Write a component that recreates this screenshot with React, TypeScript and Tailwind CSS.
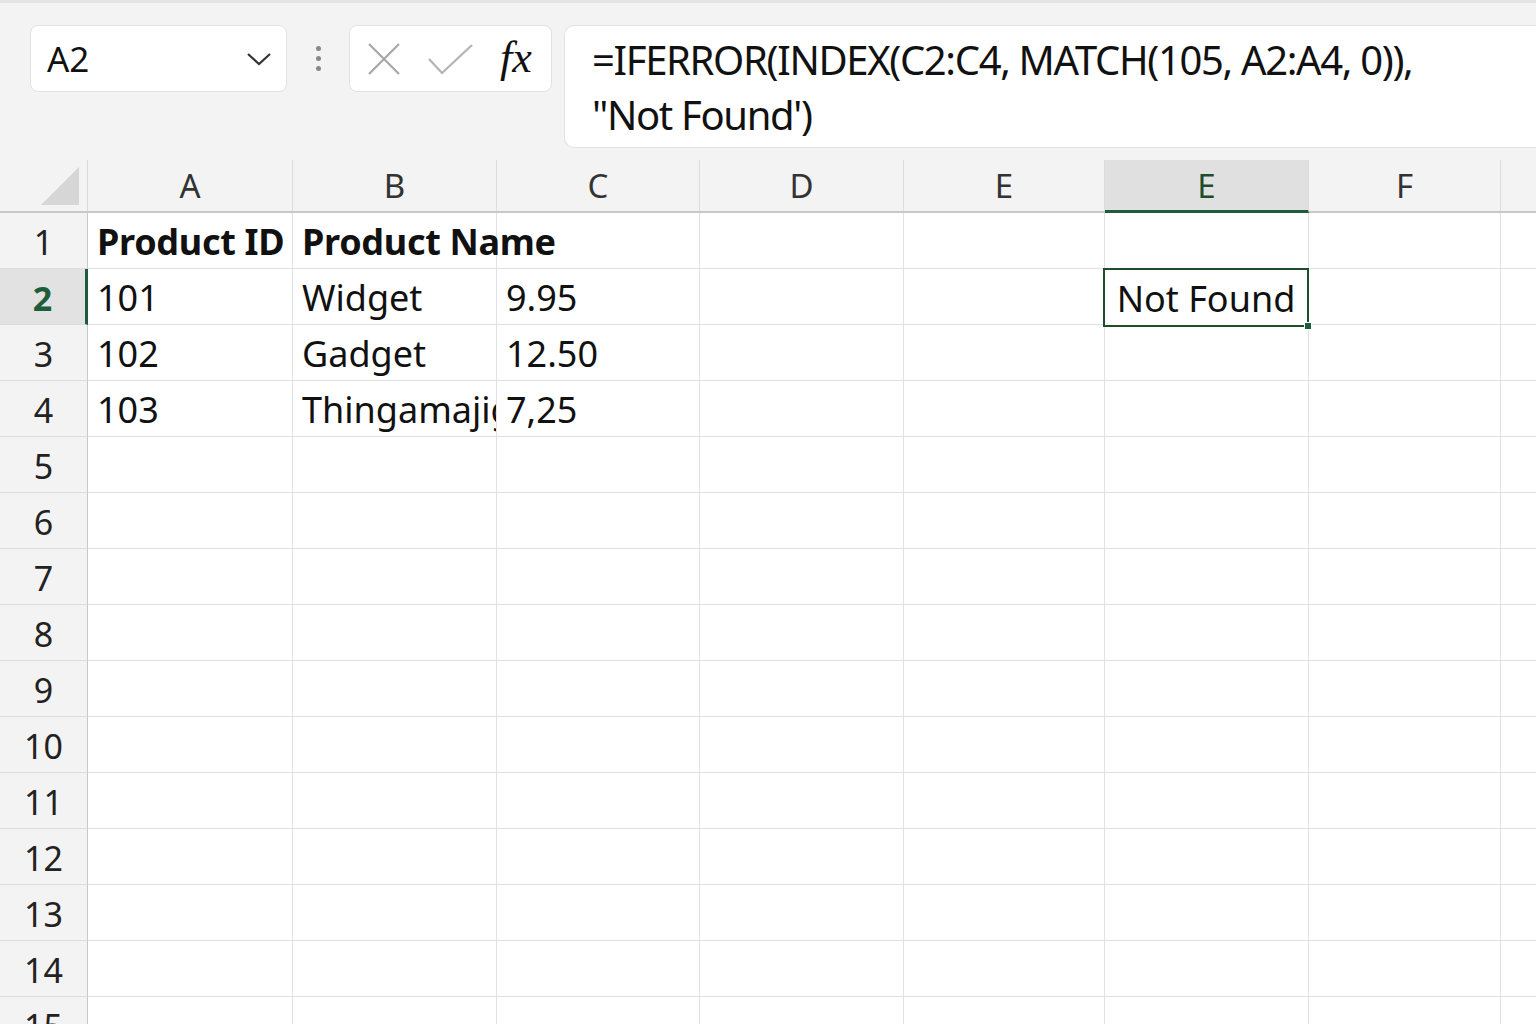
import React from "react";

const cols = [
  { label: "A", w: 205 },
  { label: "B", w: 204 },
  { label: "C", w: 203 },
  { label: "D", w: 204 },
  { label: "E", w: 201 },
  { label: "E", w: 204, sel: true },
  { label: "F", w: 192 },
  { label: "", w: 200 },
];

const data: Record<string, { t: string; bold?: boolean }> = {
  "1-0": { t: "Product ID", bold: true },
  "1-1": { t: "Product Name", bold: true },
  "2-0": { t: "101" },
  "2-1": { t: "Widget" },
  "2-2": { t: "9.95" },
  "3-0": { t: "102" },
  "3-1": { t: "Gadget" },
  "3-2": { t: "12.50" },
  "4-0": { t: "103" },
  "4-1": { t: "Thingamajig" },
  "4-2": { t: "7,25" },
};

export default function App() {
  const rows = Array.from({ length: 15 }, (_, i) => i + 1);
  return (
    <div
      className="w-[1536px] h-[1024px] overflow-hidden bg-white text-[#111]"
      style={{ fontFamily: '"Noto Sans", "Open Sans", sans-serif' }}
    >
      {/* toolbar */}
      <div className="h-[160px] bg-[#f3f3f3] border-t-[3px] border-[#e4e4e4] flex items-start pt-[22px] pl-[30px]">
        <div className="w-[257px] h-[67px] bg-white rounded-[8px] border border-[#e2e2e2] flex items-center justify-between pl-[16px] pr-[14px]">
          <span className="text-[35px] leading-none">A2</span>
          <svg width="26" height="16" viewBox="0 0 26 16">
            <path d="M2 3 L13 13 L24 3" fill="none" stroke="#333" strokeWidth="2.2" />
          </svg>
        </div>
        <div className="w-[62px] h-[67px] flex flex-col items-center justify-center gap-[5px]">
          <div className="w-[5px] h-[5px] rounded-full bg-[#888]" />
          <div className="w-[5px] h-[5px] rounded-full bg-[#888]" />
          <div className="w-[5px] h-[5px] rounded-full bg-[#888]" />
        </div>
        <div className="w-[203px] h-[67px] bg-white rounded-[8px] border border-[#e2e2e2] flex items-center pl-[16px]">
          <svg width="36" height="36" viewBox="0 0 36 36">
            <path d="M3 3 L33 33 M33 3 L3 33" stroke="#a8a8a8" strokeWidth="2.2" />
          </svg>
          <svg className="ml-[26px]" width="46" height="36" viewBox="0 0 46 36">
            <path d="M1 18 L14 32 L44 4" fill="none" stroke="#b4b4b4" strokeWidth="2.2" />
          </svg>
          <span
            className="ml-[26px] text-[44px] italic leading-none -mt-[2px]"
            style={{ fontFamily: '"Liberation Serif", "DejaVu Serif", serif' }}
          >
            fx
          </span>
        </div>
        <div className="ml-[12px] flex-1 h-[123px] bg-white rounded-l-[10px] border border-r-0 border-[#e2e2e2] pl-[27px] pt-[6px]">
          <div
            className="text-[40px] leading-[55px] tracking-[-1.35px] whitespace-nowrap"
            style={{ fontFamily: '"Noto Sans", "Open Sans", sans-serif' }}
          >
            <div>=IFERROR(INDEX(C2:C4, MATCH(105, A2:A4, 0)),</div>
            <div>"Not Found')</div>
          </div>
        </div>
      </div>

      {/* column headers */}
      <div className="flex h-[53px] bg-[#f3f3f3] border-b-2 border-[#c8c8c8]">
        <div className="w-[88px] shrink-0 relative border-r border-[#d8d8d8]">
          <svg className="absolute right-[8px] bottom-[6px]" width="38" height="38" viewBox="0 0 38 38">
            <path d="M38 0 L38 38 L0 38 Z" fill="#d6d6d6" />
          </svg>
        </div>
        {cols.map((c, i) => (
          <div
            key={i}
            className={
              "shrink-0 flex items-center justify-center text-[33px] leading-none border-r border-[#dcdcdc] " +
              (c.sel ? "bg-[#e0e0e0] text-[#1e4d2b] border-b-[3px] border-b-[#1e5c3a] -mb-[2px]" : "text-[#333]")
            }
            style={{ width: c.w }}
          >
            {c.label}
          </div>
        ))}
      </div>

      {/* rows */}
      {rows.map((r) => (
        <div key={r} className="flex h-[56px]">
          <div
            className={
              "w-[88px] shrink-0 flex items-center justify-center pt-[3px] text-[34px] leading-none border-b border-[#dcdcdc] " +
              (r === 2
                ? "bg-[#e2e2e2] text-[#1e5c3a] font-bold border-r-[3px] border-r-[#1e5c3a]"
                : "bg-[#f3f3f3] text-[#222] border-r border-r-[#c8c8c8]")
            }
          >
            {r}
          </div>
          {cols.map((c, ci) => {
            const d = data[`${r}-${ci}`];
            const isSel = r === 2 && ci === 5;
            const overflow = d && r === 1 && ci === 1;
            return (
              <div
                key={ci}
                className={
                  "shrink-0 relative flex items-center pt-[3px] border-r border-b border-[#e1e1e1] " +
                  (overflow ? "overflow-visible z-10 " : isSel ? "z-20 " : "overflow-hidden ")
                }
                style={{ width: c.w }}
              >
                {d && (
                  <span
                    className={
                      "pl-[9px] text-[36px] leading-none whitespace-nowrap " +
                      (d.bold ? "font-bold tracking-[-0.3px]" : "")
                    }
                  >
                    {d.t}
                  </span>
                )}
                {isSel && (
                  <div className="absolute -left-[2px] -top-[1px] w-[206px] h-[59px] pt-[3px] border-[2px] border-[#1e4d2b] flex items-center justify-center bg-white">
                    <span className="text-[36px] leading-none whitespace-nowrap">Not Found</span>
                    <div className="absolute -right-[5px] -bottom-[5px] w-[8px] h-[8px] bg-[#1e5c3a] border border-white" />
                  </div>
                )}
              </div>
            );
          })}
        </div>
      ))}
    </div>
  );
}
